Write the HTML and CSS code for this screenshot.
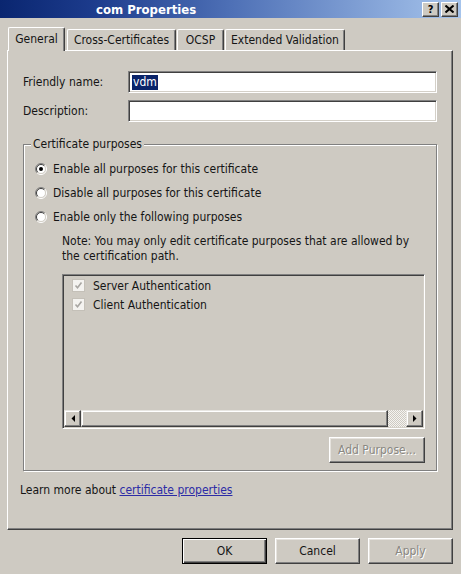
FILE: index.html
```html
<!DOCTYPE html>
<html>
<head>
<meta charset="utf-8">
<title>com Properties</title>
<link rel="stylesheet" href="styles.css">
</head>
<body>
<div class="titlebar">
  <span class="title">com Properties</span>
  <div class="caption-btns">
    <span class="cbtn">?</span>
    <span class="cbtn"><svg width="9" height="8" viewBox="0 0 9 8"><path d="M0.5 0.5 L8.5 7.5 M8.5 0.5 L0.5 7.5" stroke="#000" stroke-width="2" fill="none"/></svg></span>
  </div>
</div>
<div class="client">
  <div class="tabs">
    <div class="tab active t-general">General</div>
    <div class="tab t-cross">Cross-Certificates</div>
    <div class="tab t-ocsp">OCSP</div>
    <div class="tab t-ev">Extended Validation</div>
  </div>
  <div class="panel">
    <div class="field"><span class="label">Friendly name:</span><div class="input"><span class="sel">vdm</span></div></div>
    <div class="field"><span class="label">Description:</span><div class="input"></div></div>
    <fieldset class="group">
      <legend>Certificate purposes</legend>
      <div class="radio">
        <svg class="rb" width="12" height="12" viewBox="0 0 12 12"><circle cx="6" cy="6" r="4.5" fill="#fff"/><path d="M2.1 9.9 A5.5 5.5 0 0 1 9.9 2.1" stroke="#808080" fill="none"/><path d="M9.9 2.1 A5.5 5.5 0 0 1 2.1 9.9" stroke="#fff" fill="none"/><path d="M2.8 9.2 A4.5 4.5 0 0 1 9.2 2.8" stroke="#404040" fill="none"/><path d="M9.2 2.8 A4.5 4.5 0 0 1 2.8 9.2" stroke="#d4d0c8" fill="none"/><circle cx="6" cy="6" r="2" fill="#000"/></svg>
        <span>Enable all purposes for this certificate</span>
      </div>
      <div class="radio">
        <svg class="rb" width="12" height="12" viewBox="0 0 12 12"><circle cx="6" cy="6" r="4.5" fill="#fff"/><path d="M2.1 9.9 A5.5 5.5 0 0 1 9.9 2.1" stroke="#808080" fill="none"/><path d="M9.9 2.1 A5.5 5.5 0 0 1 2.1 9.9" stroke="#fff" fill="none"/><path d="M2.8 9.2 A4.5 4.5 0 0 1 9.2 2.8" stroke="#404040" fill="none"/><path d="M9.2 2.8 A4.5 4.5 0 0 1 2.8 9.2" stroke="#d4d0c8" fill="none"/></svg>
        <span>Disable all purposes for this certificate</span>
      </div>
      <div class="radio">
        <svg class="rb" width="12" height="12" viewBox="0 0 12 12"><circle cx="6" cy="6" r="4.5" fill="#fff"/><path d="M2.1 9.9 A5.5 5.5 0 0 1 9.9 2.1" stroke="#808080" fill="none"/><path d="M9.9 2.1 A5.5 5.5 0 0 1 2.1 9.9" stroke="#fff" fill="none"/><path d="M2.8 9.2 A4.5 4.5 0 0 1 9.2 2.8" stroke="#404040" fill="none"/><path d="M9.2 2.8 A4.5 4.5 0 0 1 2.8 9.2" stroke="#d4d0c8" fill="none"/></svg>
        <span>Enable only the following purposes</span>
      </div>
      <div class="note">Note: You may only edit certificate purposes that are allowed by<br>the certification path.</div>
      <div class="listbox">
        <div class="items">
          <div class="item">
            <svg width="13" height="13" viewBox="0 0 13 13"><rect x="0.5" y="0.5" width="12" height="12" fill="#f4f3f0" stroke="#c4c0b8"/><path d="M3.5 6.5 L5.5 8.8 L9.5 3.5" stroke="#a8a6a2" stroke-width="1.6" fill="none"/></svg>
            <span>Server Authentication</span>
          </div>
          <div class="item">
            <svg width="13" height="13" viewBox="0 0 13 13"><rect x="0.5" y="0.5" width="12" height="12" fill="#f4f3f0" stroke="#c4c0b8"/><path d="M3.5 6.5 L5.5 8.8 L9.5 3.5" stroke="#a8a6a2" stroke-width="1.6" fill="none"/></svg>
            <span>Client Authentication</span>
          </div>
        </div>
        <div class="hscroll">
          <div class="sb-btn"><svg width="4" height="7" viewBox="0 0 4 7"><path d="M4 0 L0.5 3.5 L4 7 Z" fill="#000"/></svg></div>
          <div class="thumb"></div>
          <div class="track"></div>
          <div class="sb-btn"><svg width="4" height="7" viewBox="0 0 4 7"><path d="M0 0 L3.5 3.5 L0 7 Z" fill="#000"/></svg></div>
        </div>
      </div>
      <div class="add-row"><div class="btn disabled add">Add Purpose...</div></div>
    </fieldset>
    <div class="learn">Learn more about <a class="link" href="#">certificate properties</a></div>
  </div>
  <div class="buttons">
    <div class="btn default">OK</div>
    <div class="btn">Cancel</div>
    <div class="btn disabled">Apply</div>
  </div>
</div>
</body>
</html>
```
FILE: styles.css
```css
* { box-sizing: border-box; }
html, body { margin: 0; padding: 0; }
body {
  width: 461px;
  height: 574px;
  overflow: hidden;
  background: #cecac2;
  font-family: "DejaVu Sans Condensed", "DejaVu Sans", sans-serif;
  font-stretch: condensed;
  font-size: 12px;
  color: #151515;
}

/* title bar */
.titlebar {
  height: 18px;
  display: flex;
  align-items: center;
  padding: 0 3px 0 96px;
  background: linear-gradient(to right, #0a2670 0%, #1c3b8c 20%, #4e70b6 50%, #a6c4ec 100%);
}
.title {
  flex: 1;
  color: #fff;
  font-weight: bold;
  font-size: 13px;
}
.caption-btns { display: flex; gap: 2px; }
.cbtn {
  width: 17px;
  height: 15px;
  display: flex;
  align-items: center;
  justify-content: center;
  background: #cecac2;
  border: 1px solid;
  border-color: #fff #404040 #404040 #fff;
  box-shadow: inset -1px -1px #808080;
  font-weight: bold;
  font-size: 11px;
  color: #000;
  font-family: "DejaVu Sans", sans-serif;
}

/* client area */
.client { padding: 9px 8px 0 7px; }

.tabs {
  display: flex;
  align-items: flex-end;
  height: 24px;
  padding-left: 1px;
  margin-bottom: -1px;
  position: relative;
  z-index: 1;
}
.tab {
  height: 21px;
  margin-bottom: 1px;
  margin-left: 1px;
  display: flex;
  align-items: center;
  justify-content: center;
  background: #cecac2;
  border-top: 1px solid #fff;
  border-left: 1px solid #fff;
  border-right: 1px solid #404040;
  box-shadow: inset -1px 0 #808080;
  border-top-left-radius: 2px;
  border-top-right-radius: 2px;
  white-space: nowrap;
}
.tab.active {
  height: 24px;
  margin: 0 1px 0 0;
  padding-bottom: 2px;
}
.t-general { width: 57px; }
.t-cross { width: 109px; }
.t-ocsp { width: 47px; }
.t-ev { width: 120px; }

.panel {
  height: 480px;
  border: 1px solid;
  border-color: #fff #404040 #404040 #fff;
  box-shadow: inset -1px -1px #808080;
  padding: 20px 15px 0 12px;
}

.field {
  display: flex;
  align-items: center;
  height: 22px;
  padding-left: 3px;
}
.field + .field { margin-top: 7px; }
.label { width: 105px; }
.input {
  flex: 1;
  height: 100%;
  display: flex;
  align-items: center;
  padding: 0 3px;
  background: #fff;
  border: 1px solid;
  border-color: #808080 #fff #fff #808080;
  box-shadow: inset 1px 1px #404040, inset -1px -1px #d4d0c8;
}
.sel {
  background: #0a246a;
  color: #fff;
  line-height: 15px;
  padding: 0 1px;
}

/* group box */
.group {
  margin: 15px 0 0 3px;
  padding: 6px 11px 7px 11px;
  border: 1px solid #808080;
  box-shadow: inset 1px 1px #fff, 1px 1px #fff;
  min-width: 0;
}
.group legend {
  margin-left: -4px;
  padding: 0 2px;
  line-height: 14px;
  background: #cecac2;
}
.radio {
  display: flex;
  align-items: center;
  gap: 6px;
  height: 24px;
}
.rb { flex: none; }
.note {
  margin: 5px 0 0 27px;
  line-height: 15px;
  white-space: nowrap;
}
.listbox {
  margin: 10px 0 0 27px;
  height: 155px;
  display: flex;
  flex-direction: column;
  border: 1px solid;
  border-color: #808080 #fff #fff #808080;
  box-shadow: inset 1px 1px #404040, inset -1px -1px #d4d0c8;
}
.items {
  flex: 1;
  padding: 1px 0 0 9px;
}
.item {
  display: flex;
  align-items: center;
  gap: 8px;
  height: 19px;
}
.hscroll {
  display: flex;
  height: 17px;
  margin: 0 1px 1px 1px;
}
.sb-btn, .thumb {
  background: #cecac2;
  border: 1px solid;
  border-color: #e8e6e2 #404040 #404040 #e8e6e2;
  box-shadow: inset -1px -1px #808080, inset 1px 1px #fff;
}
.sb-btn {
  width: 17px;
  display: flex;
  align-items: center;
  justify-content: center;
}
.thumb { flex: 1; }
.track {
  width: 18px;
  background: repeating-conic-gradient(#f4f3f0 0 25%, #cecac2 0 50%) 0 0 / 2px 2px;
}
.add-row {
  display: flex;
  justify-content: flex-end;
  margin-top: 8px;
}

/* buttons */
.btn {
  width: 85px;
  height: 26px;
  display: flex;
  align-items: center;
  justify-content: center;
  background: #cecac2;
  border: 1px solid;
  border-color: #fff #404040 #404040 #fff;
  box-shadow: inset -1px -1px #808080, inset 1px 1px #e6e3de;
  white-space: nowrap;
}
.btn.add { width: 96px; }
.btn.disabled {
  color: #8a8882;
  text-shadow: 1px 1px #fff;
}
.btn.default {
  border-color: #000;
  box-shadow: inset 1px 1px #fff, inset -1px -1px #404040, inset -2px -2px #808080;
}

.learn {
  margin-top: 12px;
  line-height: 15px;
}
.link {
  color: #2c2ca6;
  text-decoration: underline;
}

.buttons {
  display: flex;
  justify-content: flex-end;
  gap: 8px;
  margin-top: 8px;
}
```
